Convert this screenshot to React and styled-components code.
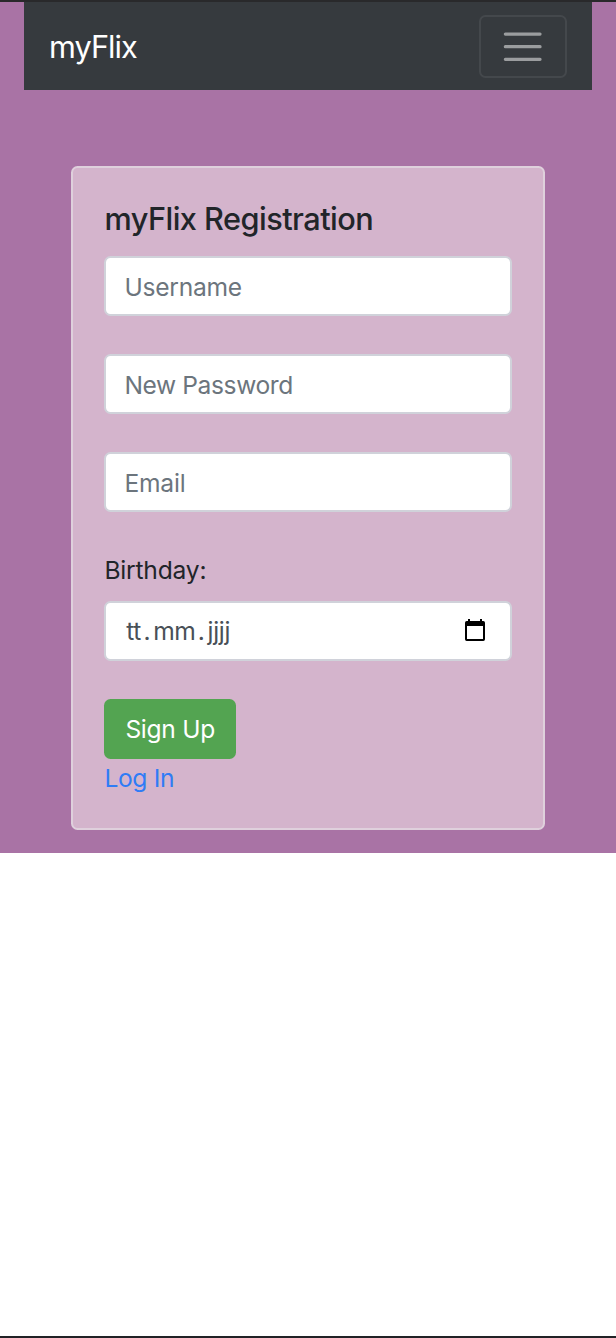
import React from "react";
import styled, { createGlobalStyle } from "styled-components";

const GlobalStyle = createGlobalStyle`
  *, *::before, *::after { box-sizing: border-box; }
  body {
    margin: 0;
    background: #fff;
    color: #212529;
    font-family: Inter, "Liberation Sans", sans-serif;
    font-size: 24.6px;
    font-weight: 430;
    line-height: 38px;
  }
`;

const Screen = styled.div`
  display: flex;
  flex-direction: column;
  height: 1338px;
  border-top: 2px solid #29292b;
  border-bottom: 2px solid #212226;
`;

const Page = styled.main`
  height: 851.4px;
  padding: 0 23.7px;
  background: #a973a5;
`;

const Navbar = styled.nav`
  display: flex;
  align-items: center;
  justify-content: space-between;
  height: 88.4px;
  padding: 0 25.3px;
  background: #363a3e;
`;

const Brand = styled.a`
  padding-top: 2px;
  color: #fff;
  font-size: 30.7px;
  letter-spacing: -0.95px;
  text-decoration: none;
`;

const Toggler = styled.button`
  display: flex;
  align-items: center;
  justify-content: center;
  width: 88.5px;
  height: 63px;
  margin-top: 0.8px;
  padding: 0;
  border: 2px solid rgba(255, 255, 255, 0.075);
  border-radius: 6.5px;
  background: transparent;
`;

const Card = styled.form`
  display: flex;
  flex-direction: column;
  align-items: flex-start;
  width: 474px;
  height: 663.5px;
  margin: 76px auto 0;
  padding: 32px 31.4px 0;
  border: 2px solid #dfd0dc;
  border-radius: 6.5px;
  background: #d4b4cc;
`;

const Title = styled.h1`
  margin: 0 0 18px;
  font-size: 30.7px;
  font-weight: 530;
  line-height: 38px;
  letter-spacing: -0.53px;
`;

const Field = styled.div`
  display: flex;
  align-items: center;
  width: 407.5px;
  height: 60px;
  margin-bottom: 38px;
  padding: 0 18px;
  border: 2px solid #d0d2da;
  border-radius: 6.5px;
  background: #fff;
`;

const Input = styled.input`
  flex: 1;
  min-width: 0;
  height: 40px;
  padding: 2px 0 0;
  border: 0;
  outline: 0;
  background: transparent;
  font: inherit;
  letter-spacing: ${(p) => p.$tracking}px;
  &::placeholder { color: #6c757d; opacity: 1; }
`;

const DateParts = styled.div`
  display: flex;
  flex: 1;
  padding-left: 0.5px;
  color: #495057;
`;

const DatePart = styled.span`
  padding: 0 1.3px;
  letter-spacing: ${(p) => p.$tracking || 0}px;
`;

const CalendarButton = styled.span`
  display: flex;
  margin: -2px 5.5px 0 0;
`;

const Label = styled.label`
  margin: 1px 0 12px;
  letter-spacing: -0.2px;
`;

const SubmitButton = styled.button`
  width: 131.5px;
  height: 60px;
  padding: 0;
  border: 0;
  border-radius: 6.5px;
  background: #53a451;
  color: #fff;
  font: inherit;
  letter-spacing: -0.3px;
`;

const LoginLink = styled.a`
  color: #2f7cf6;
  letter-spacing: -0.35px;
  text-decoration: none;
`;

const MenuIcon = () => (
  <svg width="47.4" height="47.4" viewBox="0 0 30 30" fill="none" stroke="rgba(255,255,255,.5)" strokeWidth="2" strokeLinecap="round">
    <path d="M4 7h22M4 15h22M4 23h22" />
  </svg>
);

const CalendarIcon = () => (
  <svg width="22" height="24" viewBox="0 0 22 24">
    <path fill="#000" fillRule="evenodd" d="M4 1h2v2h10V1h2v2h1.3A1.7 1.7 0 0 1 21 4.7v16.6a1.7 1.7 0 0 1-1.7 1.7H2.7A1.7 1.7 0 0 1 1 21.3V4.7A1.7 1.7 0 0 1 2.7 3H4zM3 8v13h16V8z" />
  </svg>
);

export default function App() {
  return (
    <Screen>
      <GlobalStyle />
      <Page>
        <Navbar>
          <Brand href="#">myFlix</Brand>
          <Toggler type="button" aria-label="Toggle navigation">
            <MenuIcon />
          </Toggler>
        </Navbar>
        <Card>
          <Title>myFlix Registration</Title>
          <Field><Input placeholder="Username" $tracking={-0.25} /></Field>
          <Field><Input type="password" placeholder="New Password" $tracking={-0.4} /></Field>
          <Field><Input type="email" placeholder="Email" $tracking={-0.2} /></Field>
          <Label>Birthday:</Label>
          <Field>
            <DateParts>
              <DatePart $tracking={-0.4}>tt</DatePart>
              <DatePart>.</DatePart>
              <DatePart $tracking={-0.5}>mm</DatePart>
              <DatePart>.</DatePart>
              <DatePart $tracking={-0.3}>jjjj</DatePart>
            </DateParts>
            <CalendarButton><CalendarIcon /></CalendarButton>
          </Field>
          <SubmitButton type="button">Sign Up</SubmitButton>
          <LoginLink href="#">Log In</LoginLink>
        </Card>
      </Page>
    </Screen>
  );
}
